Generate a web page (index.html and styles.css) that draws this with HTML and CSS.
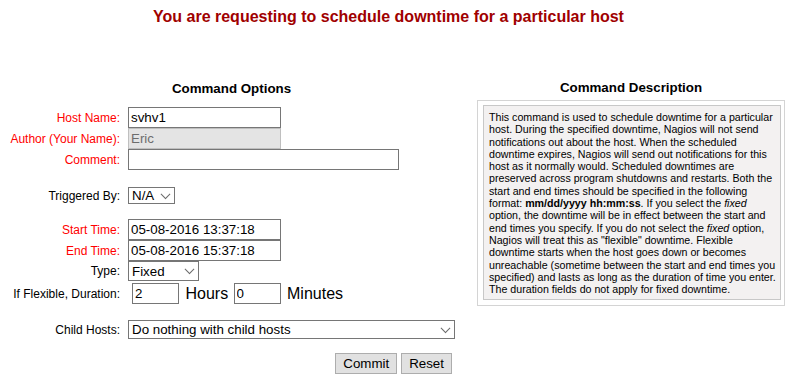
FILE: index.html
```html
<!DOCTYPE html>
<html lang="en">
<head>
    <meta charset="UTF-8">
    <title>External Command Interface</title>
    <link rel="stylesheet" href="styles.css">
</head>
<body>
    <div class="cmd-type">You are requesting to schedule downtime for a particular host</div>

    <div class="cmd-layout">
        <div class="opt-col">
            <div class="box-title">Command Options</div>

            <form class="opt-grid" method="POST" action="cmd.cgi">
                <label class="item req">Host Name:</label>
                <div><input class="text" type="text" name="host" value="svhv1"></div>

                <label class="item req">Author (Your Name):</label>
                <div><input class="text" type="text" name="com_author" value="Eric" disabled></div>

                <label class="item req">Comment:</label>
                <div><input class="text wide" type="text" name="com_data" value=""></div>

                <div class="spacer s17"></div>

                <label class="item">Triggered By:</label>
                <div><span class="select trig"><select name="trigger"><option>N/A</option></select></span></div>

                <div class="spacer s15"></div>

                <label class="item req">Start Time:</label>
                <div><input class="text" type="text" name="start_time" value="05-08-2016 13:37:18"></div>

                <label class="item req">End Time:</label>
                <div><input class="text" type="text" name="end_time" value="05-08-2016 15:37:18"></div>

                <label class="item">Type:</label>
                <div><span class="select type"><select name="fixed"><option>Fixed</option><option>Flexible</option></select></span></div>

                <label class="item dur-label">If Flexible, Duration:</label>
                <p class="duration"><input class="text short" type="text" name="hours" value="2"> Hours <input class="text short" type="text" name="minutes" value="0"> Minutes</p>

                <div class="spacer s16"></div>

                <label class="item">Child Hosts:</label>
                <div><span class="select child"><select name="childoptions"><option>Do nothing with child hosts</option></select></span></div>

                <div class="spacer s14"></div>

                <div class="buttons">
                    <button type="submit">Commit</button>
                    <button type="reset">Reset</button>
                </div>
            </form>
        </div>

        <div class="desc-col">
            <div class="box-title">Command Description</div>
            <div class="desc-outer">
                <div class="desc">
                    This command is used to schedule downtime for a particular host. During the specified downtime, Nagios will not send notifications out about the host. When the scheduled downtime expires, Nagios will send out notifications for this host as it normally would. Scheduled downtimes are preserved across program shutdowns and restarts. Both the start and end times should be specified in the following format: <b>mm/dd/yyyy hh:mm:ss</b>. If you select the <i>fixed</i> option, the downtime will be in effect between the start and end times you specify. If you do not select the <i>fixed</i> option, Nagios will treat this as "flexible" downtime. Flexible downtime starts when the host goes down or becomes unreachable (sometime between the start and end times you specified) and lasts as long as the duration of time you enter. The duration fields do not apply for fixed downtime.
                </div>
            </div>
        </div>
    </div>
</body>
</html>
```

FILE: styles.css
```css
body {
    font-family: Arial, "Liberation Sans", sans-serif;
    font-size: 16px;
    color: #000;
    background: #fff;
    margin: 8px;
}

.cmd-type {
    font-size: 16px;
    line-height: 18px;
    font-weight: bold;
    color: #a00000;
    text-align: center;
    padding-right: 18px;
}

.cmd-layout {
    display: flex;
    gap: 22px;
    margin-top: 54px;
}

.opt-col {
    width: 447px;
    flex: none;
}

.desc-col {
    width: 308px;
    flex: none;
}

.box-title {
    font-size: 13.33px;
    line-height: 16px;
    font-weight: bold;
    text-align: center;
}

.opt-col .box-title {
    margin-top: 1px;
    margin-bottom: 10px;
}

.desc-col .box-title {
    margin-bottom: 4px;
}

/* options table */
.opt-grid {
    display: grid;
    grid-template-columns: 112px auto;
    column-gap: 8px;
    align-items: center;
    margin: 0;
}

.item {
    font-size: 12px;
    text-align: right;
    white-space: nowrap;
}

.req {
    color: #ff0000;
}

.spacer {
    grid-column: 1 / -1;
}
.s17 { height: 17px; }
.s16 { height: 16px; }
.s15 { height: 15px; }
.s14 { height: 14px; }

.opt-grid > div {
    display: flex;
    align-items: center;
}

input.text {
    font-family: Arial, "Liberation Sans", sans-serif;
    font-size: 13.33px;
    color: #000;
    width: 153px;
    height: 21px;
    box-sizing: border-box;
    padding: 1px 2px;
    margin: 0;
    border: 1px solid #767676;
    border-radius: 0;
    background: #fff;
    outline: none;
}

input.wide {
    width: 271px;
}

input.text:disabled {
    background: #e4e4e4;
    border-color: #bfbfbf;
    color: #6d6d6d;
}

.duration {
    margin: 2px 0 0;
    height: 21px;
    line-height: 21px;
    font-size: 16px;
    white-space: nowrap;
}

.duration input.short {
    width: 47px;
    margin: 0 2px 0 1px;
    vertical-align: top;
}

.duration input.short:first-child {
    margin-left: 4px;
}

.dur-label {
    margin-top: 2px;
}

/* select boxes with a thin chevron */
.select {
    position: relative;
    display: inline-block;
}

.select select {
    appearance: none;
    -webkit-appearance: none;
    font-family: Arial, "Liberation Sans", sans-serif;
    font-size: 13.33px;
    color: #000;
    background: #fff;
    border: 1px solid #767676;
    border-radius: 0;
    padding: 0 0 0 3px;
    margin: 0;
    box-sizing: border-box;
    outline: none;
    display: block;
}

.select::after {
    content: "";
    position: absolute;
    right: 6px;
    top: 50%;
    width: 6px;
    height: 6px;
    border-right: 1px solid #6a6a6a;
    border-bottom: 1px solid #6a6a6a;
    transform: translateY(-75%) rotate(45deg);
    pointer-events: none;
}

.trig select { width: 47px; height: 17px; line-height: 15px; }
.type select { width: 71px; height: 20px; }
.child select { width: 327px; height: 19px; }

/* buttons */
.buttons {
    grid-column: 1 / -1;
    justify-content: flex-end;
    gap: 4px;
    padding-right: 3px;
}

button {
    font-family: Arial, "Liberation Sans", sans-serif;
    font-size: 13.33px;
    color: #000;
    height: 21px;
    padding: 1px 7px;
    background: #e1e1e1;
    border: 1px solid #adadad;
    border-radius: 0;
}

/* description box */
.desc-outer {
    border: 1px solid #d4d4d4;
    padding: 4px 3px 5px 5px;
}

.desc {
    border: 1px solid #c8c8c8;
    background: #f3f1f1;
    padding: 5px 1px 4px 5px;
    font-size: 10.67px;
    line-height: 12.3px;
}
```
